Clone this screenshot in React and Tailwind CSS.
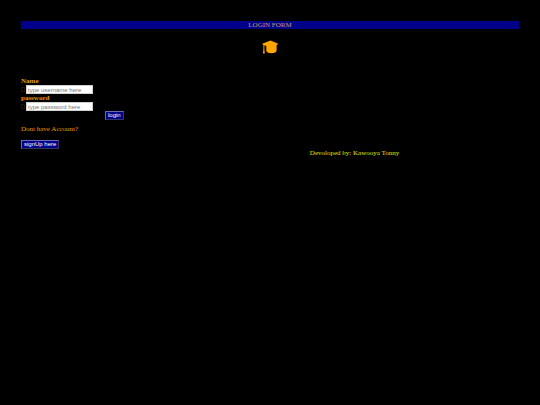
import { useState } from 'react';

const fields = [
  { key: 'username', label: 'Name', type: 'text', placeholder: 'type username here' },
  { key: 'password', label: 'password', type: 'password', placeholder: 'type password here' },
];

const buttonClass =
  "block h-[9px] border border-t-[#6a6ab8] border-l-[#6a6ab8] border-r-[#33335c] border-b-[#33335c] bg-[#00008b] px-[2px] font-['Liberation_Sans',sans-serif] text-[6px] leading-[7px] text-white";

const GraduationCap = () => (
  <svg viewBox="0 0 16 14" className="h-[14px] w-4" fill="currentColor" aria-hidden="true">
    <path d="M8.6 0.6 L15.6 3.6 Q16.2 4 15.6 4.4 L14.6 5.1 V10.6 Q14.4 13.2 9.3 13.3 Q4.6 13.2 4.3 10.8 V6 L2.4 5.3 V9.4 L2.8 13.5 H0.9 L1.4 9.4 V4.9 L0.7 4.4 Q0.2 4 0.8 3.6 Z" />
  </svg>
);

const App = () => {
  const [values, setValues] = useState({ username: '', password: '' });

  const handleChange = (key) => (e) => {
    setValues({ ...values, [key]: e.target.value });
  };

  return (
    <div className="min-h-screen bg-black px-[21px] pt-[21px] font-['Liberation_Serif',serif] text-[7px] leading-[8px] text-[#eb9800]">
      <h1 className="bg-[#00008b] text-center text-[#c69a6b]">LOGIN FORM</h1>

      <div className="mt-[11px] flex justify-center text-[orange]">
        <GraduationCap />
      </div>

      {/* Login Form */}
      <form className="mt-[23px]" onSubmit={(e) => e.preventDefault()}>
        {fields.map((field) => (
          <div key={field.key}>
            <label htmlFor={field.key} className="block font-bold">
              {field.label}
            </label>
            <div className="flex items-center">
              <span className="mr-px h-[5px] w-1 border border-[#1c1400]" />
              <input
                id={field.key}
                type={field.type}
                placeholder={field.placeholder}
                value={values[field.key]}
                onChange={handleChange(field.key)}
                className="h-[9px] w-[67px] border border-[#d0d0d0] bg-white px-px font-['Liberation_Sans',sans-serif] text-[6px] leading-[7px] text-black placeholder:text-[#757575]"
              />
            </div>
          </div>
        ))}
        <button type="submit" className={`${buttonClass} ml-[84px]`}>
          login
        </button>
      </form>

      <p className="mt-[5px]">Dont have Account?</p>
      <button type="button" className={`${buttonClass} mt-[7px]`}>
        signUp here
      </button>

      <footer className="ml-[58%] text-[#e0e000]">Devoloped by: Kawooya Tonny</footer>
    </div>
  );
};

export default App;
